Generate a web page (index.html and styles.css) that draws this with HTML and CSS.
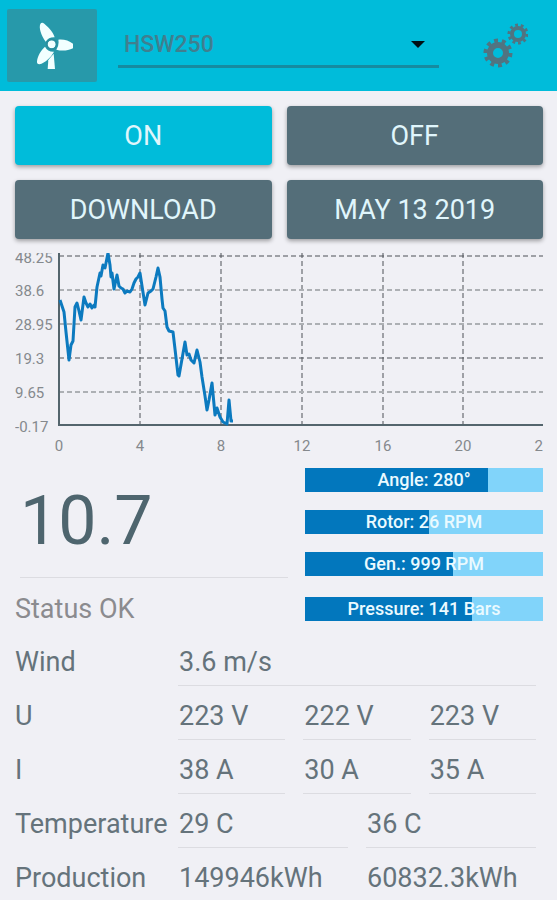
FILE: index.html
```html
<!DOCTYPE html>
<html lang="en">
<head>
  <meta charset="UTF-8">
  <meta name="viewport" content="width=device-width, initial-scale=1">
  <title>HSW250</title>
  <link rel="stylesheet" href="styles.css">
</head>
<body>
  <header class="topbar">
    <button class="logo-btn" type="button" aria-label="Turbine">
      <svg width="42" height="50" viewBox="-12 0 126 150" fill="#f2ffff">
        <path d="M32 62 C18 43 11 20 16 9 Q20 2 28 8 C43 21 56 36 59 49 Q41 48 32 62Z"/>
        <path d="M70 56 C88 54 107 60 119 73 Q121 78 115 81 C98 90 80 90 64 86 Q73 73 70 56Z"/>
        <path d="M30 77 Q38 93 57 92 C48 109 31 125 13 130 Q5 130 6 121 C8 104 18 88 30 77Z"/>
        <path d="M42 115 L56 98 L60 144 H38 L40 118Z"/>
        <circle cx="50" cy="70" r="12"/>
        <circle cx="50" cy="70" r="15" fill="none" stroke="#2b8e9e" stroke-width="5"/>
      </svg>
    </button>
    <div class="device">
      <select class="device-select" aria-label="Device">
        <option>HSW250</option>
      </select>
    </div>
    <button class="settings-btn" type="button" aria-label="Settings">
      <svg width="48" height="48" viewBox="0 0 48 48" fill="none" stroke="#507481">
        <circle cx="18" cy="31" r="8" stroke-width="6"/>
        <circle cx="18" cy="31" r="12" stroke-width="5" pathLength="100" stroke-dasharray="5 5"/>
        <circle cx="38" cy="12" r="6" stroke-width="4"/>
        <circle cx="38" cy="12" r="9" stroke-width="3" pathLength="100" stroke-dasharray="5 5"/>
      </svg>
    </button>
  </header>

  <main class="content">
    <div class="actions">
      <button class="btn active" type="button">ON</button>
      <button class="btn" type="button">OFF</button>
      <button class="btn" type="button">DOWNLOAD</button>
      <button class="btn" type="button">MAY 13 2019</button>
    </div>

    <svg class="chart" viewBox="0 0 528 203" role="img" aria-label="Power by hour">
      <g class="grid dark">
        <path d="M44 3H528M44 105H528"/>
        <path d="M125 0V172M206 0V172M287 0V172M368 0V172M448 0V172"/>
      </g>
      <path class="grid" d="M44 37H528M44 71H528M44 139H528"/>
      <path class="axis" d="M44 0V172H528"/>
      <polyline class="line" points="45,47 49,59 51,79 54,107 56,92 58,88 60,54 62,50 64,58 66,67 69,44 71,50 73,54 75,51 77,55 79,52 80,54 82,34 85,20 86,23 88,12 90,15 92,5 93,0 95,12 96,24 97,20 99,36 102,22 104,33 106,35 108,36 110,40 112,38 115,39 117,36 119,30 121,26 123,24 125,20 127,33 130,52 133,40 136,38 138,36 141,24 143,15 145,24 147,46 148,55 150,58 152,74 154,78 158,79 160,96 163,122 164,123 167,106 170,89 172,102 174,101 176,107 179,110 182,97 185,109 187,124 190,143 192,157 194,147 197,130 200,162 202,155 205,164 208,169 212,171 214,147 216,168 218,168"/>
      <g class="labels">
        <text x="0" y="10">48.25</text>
        <text x="0" y="43">38.6</text>
        <text x="0" y="77">28.95</text>
        <text x="0" y="111">19.3</text>
        <text x="0" y="145">9.65</text>
        <text x="0" y="179">-0.17</text>
      </g>
      <g class="labels hours">
        <text x="44" y="198">0</text>
        <text x="125" y="198">4</text>
        <text x="206" y="198">8</text>
        <text x="287" y="198">12</text>
        <text x="368" y="198">16</text>
        <text x="448" y="198">20</text>
        <text x="528" y="198">24</text>
      </g>
    </svg>

    <section class="summary">
      <div class="power">10.7</div>
      <div class="gauges">
        <div class="gauge">
          <div class="fill" style="width: 77%"></div>
          <span>Angle: 280°</span>
        </div>
        <div class="gauge">
          <div class="fill" style="width: 52%"></div>
          <span>Rotor: 26 RPM</span>
        </div>
        <div class="gauge">
          <div class="fill" style="width: 62%"></div>
          <span>Gen.: 999 RPM</span>
        </div>
      </div>
      <div class="status">Status OK</div>
      <div class="gauge">
        <div class="fill" style="width: 70%"></div>
        <span>Pressure: 141 Bars</span>
      </div>
    </section>

    <table class="readings">
      <tbody>
        <tr>
          <th scope="row">Wind</th>
          <td class="full">3.6 m/s</td>
        </tr>
        <tr>
          <th scope="row">U</th>
          <td>223 V</td>
          <td>222 V</td>
          <td>223 V</td>
        </tr>
        <tr>
          <th scope="row">I</th>
          <td>38 A</td>
          <td>30 A</td>
          <td>35 A</td>
        </tr>
        <tr>
          <th scope="row">Temperature</th>
          <td class="half">29 C</td>
          <td class="half">36 C</td>
        </tr>
        <tr>
          <th scope="row">Production</th>
          <td class="half">149946kWh</td>
          <td class="half">60832.3kWh</td>
        </tr>
      </tbody>
    </table>
  </main>
</body>
</html>
```
FILE: styles.css
```css
* {
  box-sizing: border-box;
}
body {
  margin: 0;
  background: #f0f0f5;
  color: #65737b;
  font-family: Roboto, sans-serif;
  font-size: 27px;
}
button, select {
  font-family: inherit;
  border: none;
  cursor: pointer;
}
.topbar {
  display: flex;
  align-items: center;
  height: 91px;
  padding: 0 24px 0 7px;
  background: #00bcda;
}
.logo-btn {
  display: flex;
  align-items: center;
  justify-content: center;
  width: 90px;
  height: 73px;
  padding: 0;
  border-radius: 2px;
  background: #2799aa;
}
.device {
  display: grid;
  flex: 1;
  align-items: center;
  margin: 0 41px 0 21px;
  border-bottom: 3px solid #168ba0;
}
.device-select, .device::after {
  grid-area: 1 / 1;
}
.device-select {
  width: 100%;
  height: 42px;
  padding: 0 6px;
  appearance: none;
  background: transparent;
  color: #407f8f;
  font-size: 23px;
  font-weight: 500;
}
.device::after {
  content: "";
  justify-self: end;
  margin-right: 14px;
  border: 7px solid transparent;
  border-top-color: #001014;
  border-bottom: none;
  pointer-events: none;
}
.settings-btn {
  display: flex;
  padding: 0;
  margin-right: 5px;
  background: transparent;
}
.content {
  padding: 15px 14px 0 15px;
}
.actions {
  display: grid;
  grid-template-columns: 1fr 1fr;
  gap: 15px;
}
.btn {
  height: 59px;
  border-radius: 4px;
  background: #546e79;
  color: #e0f6fc;
  font-size: 27px;
  box-shadow: 0 2px 4px rgba(0, 0, 0, 0.35);
}
.btn.active {
  background: #00bcda;
}
.chart {
  display: block;
  width: 100%;
  margin-top: 14px;
}
.grid {
  fill: none;
  stroke: #adb0b4;
  stroke-width: 2;
  stroke-dasharray: 5 3;
}
.dark {
  stroke: #4c5156;
  stroke-width: 1;
}
.axis {
  fill: none;
  stroke: #54656d;
  stroke-width: 2;
}
.line {
  fill: none;
  stroke: #0c7abf;
  stroke-width: 3;
  stroke-linejoin: round;
}
.labels {
  fill: #85898d;
  font-size: 15px;
}
.hours {
  text-anchor: middle;
}
.summary {
  display: grid;
  grid-template-columns: 1fr 238px;
  column-gap: 17px;
  row-gap: 15px;
  margin-top: 12px;
}
.power {
  height: 110px;
  margin-left: 5px;
  border-bottom: 1px solid #dcdce1;
  color: #4e656e;
  font-size: 68px;
  line-height: 106px;
}
.gauges {
  display: flex;
  flex-direction: column;
  gap: 18px;
}
.gauge {
  display: grid;
  height: 24px;
  background: #81d4fa;
}
.gauge > * {
  grid-area: 1 / 1;
}
.gauge span {
  color: #eafaff;
  font-size: 18px;
  font-weight: 500;
  line-height: 24px;
  text-align: center;
}
.fill {
  background: #0277bd;
}
.status {
  margin-top: 4px;
  color: #8b8b8f;
  line-height: 24px;
}
.summary > .gauge {
  margin-top: 4px;
}
.readings {
  display: block;
  margin: 14px 7px 0 0;
}
.readings tbody {
  display: block;
}
.readings tr {
  display: grid;
  grid-template-columns: 145px repeat(6, 1fr);
  column-gap: 18px;
  height: 54px;
}
.readings th, .readings td {
  padding: 0;
  line-height: 54px;
  font-weight: 400;
  text-align: left;
  white-space: nowrap;
}
.readings td {
  grid-column: span 2;
  height: 51px;
  padding-left: 1px;
  border-bottom: 1px solid #dcdce1;
}
.readings .half {
  grid-column: span 3;
}
.readings .full {
  grid-column: span 6;
}
.readings tr:last-child td {
  border-bottom: none;
}
```
